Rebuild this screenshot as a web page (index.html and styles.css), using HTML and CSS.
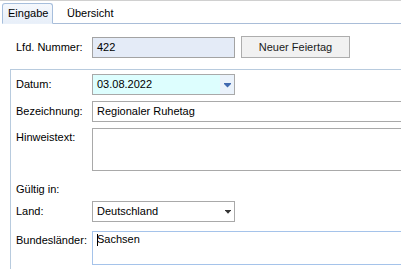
FILE: index.html
```html
<!DOCTYPE html>
<html lang="de">
<head>
<meta charset="utf-8">
<title>Feiertag</title>
<link rel="stylesheet" href="styles.css">
</head>
<body>
<div class="window">
  <div class="tabstrip">
    <div class="tab active">Eingabe</div>
    <div class="tab">Übersicht</div>
    <div class="tab-fill"></div>
  </div>
  <div class="toprow">
    <div class="label">Lfd. Nummer:</div>
    <div class="field readonly">422</div>
    <div class="button">Neuer Feiertag</div>
  </div>
  <div class="group">
    <div class="row">
      <div class="label">Datum:</div>
      <div class="field combo date">
        <span class="value">03.08.2022</span>
        <span class="drop blue"><svg width="7" height="5" viewBox="0 0 7 5"><rect x="0" y="0" width="7" height="1" fill="#4169b0"/><polygon points="0,1 7,1 3.5,4.6" fill="#4169b0"/></svg></span>
      </div>
    </div>
    <div class="row">
      <div class="label">Bezeichnung:</div>
      <div class="field wide">Regionaler Ruhetag</div>
    </div>
    <div class="row top">
      <div class="label">Hinweistext:</div>
      <div class="field wide memo"></div>
    </div>
    <div class="section">Gültig in:</div>
    <div class="row">
      <div class="label">Land:</div>
      <div class="field combo">
        <span class="value">Deutschland</span>
        <span class="drop plain"><svg width="6" height="4" viewBox="0 0 6 4"><rect x="0" y="0" width="6" height="1" fill="#333"/><polygon points="0.5,1 5.5,1 3,3.8" fill="#333"/></svg></span>
      </div>
    </div>
    <div class="row top last">
      <div class="label">Bundesländer:</div>
      <div class="field wide list"><span class="caret"></span>Sachsen</div>
    </div>
  </div>
</div>
</body>
</html>
```
FILE: styles.css
```css
html, body {
  margin: 0;
  padding: 0;
  background: #ffffff;
}
body {
  width: 401px;
  height: 269px;
  overflow: hidden;
  font-family: "Liberation Sans", Arial, sans-serif;
  font-size: 11px;
  color: #000;
}
.window {
  width: 401px;
  height: 269px;
  overflow: hidden;
  border-top: 1px solid #d0d0d0;
  box-sizing: border-box;
}
.tabstrip {
  display: flex;
  align-items: flex-end;
  height: 23px;
  padding-left: 2px;
}
.tab {
  box-sizing: border-box;
  height: 21px;
  line-height: 19px;
  padding: 0 8px 0 14px;
  border-top: 1px solid transparent;
  border-bottom: 1px solid #a9bdd8;
}
.tab.active {
  width: 51px;
  padding: 0 0 0 5px;
  border: 1px solid #a6bedc;
  border-bottom: 1px solid #eaf1fa;
  border-radius: 3px 3px 0 0;
  background: linear-gradient(#f5f8fc, #e8eff9);
}
.tab-fill {
  flex: 1;
  height: 1px;
  background: #a9bdd8;
}
.toprow {
  display: flex;
  align-items: center;
  margin-top: 12px;
  padding-left: 16px;
  height: 22px;
}
.label {
  width: 76px;
  flex: none;
  line-height: 13px;
}
.field {
  box-sizing: border-box;
  height: 21px;
  border: 1px solid #a9a9a9;
  padding-left: 4px;
  line-height: 19px;
  white-space: nowrap;
  background: #fff;
  flex: none;
}
.readonly {
  width: 143px;
  background: #e4ebf7;
  border-color: #a3a3a3;
}
.button {
  box-sizing: border-box;
  width: 109px;
  height: 22px;
  margin-left: 6px;
  border: 1px solid #adadad;
  background: #f1f1f1;
  text-align: center;
  line-height: 20px;
  color: #1a1a1a;
}
.group {
  margin: 11px 0 0 10px;
  border-top: 1px solid #b8cbde;
  border-left: 1px solid #b8cbde;
  padding: 4px 0 0 5px;
  height: 300px;
}
.row {
  display: flex;
  align-items: center;
  margin-bottom: 6px;
}
.row.top {
  align-items: flex-start;
}
.row.top .label {
  padding-top: 3px;
}
.combo {
  width: 143px;
  display: flex;
  padding-left: 0;
}
.combo .value {
  flex: 1;
  padding-left: 4px;
}
.combo .drop {
  width: 14px;
  display: flex;
  align-items: center;
  justify-content: center;
}
.combo .drop svg {
  display: block;
}
.combo .drop.blue svg {
  margin-top: 1px;
}
.combo .drop.plain {
  padding-left: 2px;
  box-sizing: border-box;
}
.date {
  background: #ddfefe;
}
.date .drop.blue {
  background: #eaf2fb;
}
.wide {
  width: 330px;
}
.memo {
  height: 43px;
}
.section {
  line-height: 13px;
  margin-top: 12px;
  margin-bottom: 5px;
}
.row.last {
  margin-top: 9px;
}
.list {
  height: 34px;
  border-color: #a5c3ea;
  line-height: 13px;
  padding-top: 1px;
  padding-left: 4px;
}
.caret {
  display: inline-block;
  width: 1px;
  height: 12px;
  background: #000;
  vertical-align: top;
  margin-top: 1px;
  margin-right: -1px;
}
```
